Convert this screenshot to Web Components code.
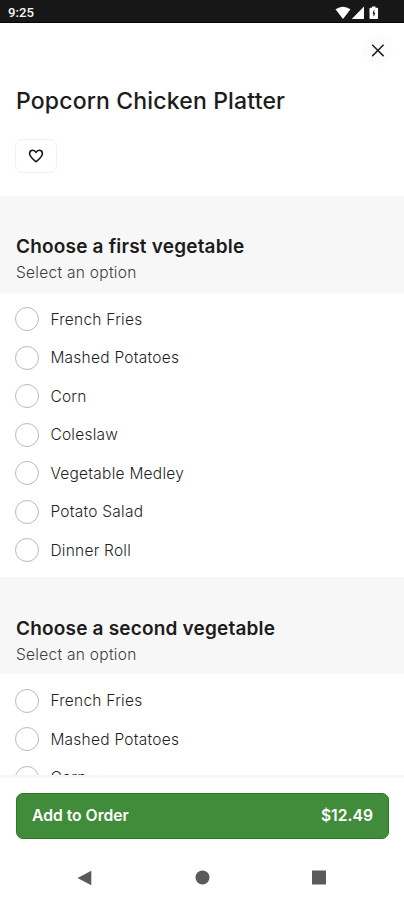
<!DOCTYPE html>
<html lang="en">
<head>
<meta charset="utf-8">
<title>Popcorn Chicken Platter</title>
<style>
html,body{margin:0;height:100%;overflow:hidden;background:#fff}
body{font-family:Inter,"Liberation Sans",sans-serif;color:#1c1c1c}
</style>
</head>
<body>
<order-screen></order-screen>
<script>
const define = (name, html, setup) => {
  const template = document.createElement('template');
  template.innerHTML = html;
  customElements.define(name, class extends HTMLElement {
    constructor() {
      super();
      this.attachShadow({ mode: 'open' }).append(template.content.cloneNode(true));
    }
    connectedCallback() { if (setup) setup(this, this.shadowRoot); }
  });
};

define('status-bar', `
<style>
:host{display:flex;box-sizing:border-box;height:23px;background:#171717;color:#f6f6f6;align-items:center;justify-content:space-between;padding:3px 23px 0 8px;border-bottom:1px solid #050505;font:500 13.200px/20px Roboto,sans-serif}
svg{display:block}
</style>
<span>9:25</span>
<svg width="46" height="14" viewBox="0 0 46 14" fill="#fff">
<path d="M.500 3.200Q8-1.800 15.500 3.200L8 13Z"/>
<path d="M29 .600V13H16.800Z"/>
<path fill-rule="evenodd" d="M37 .500h3.500v1.200h1.700q.8 0 .8.800v9.700q0 .8-.8.800h-6.900q-.8 0-.8-.8V2.500q0-.8.8-.8h1.700ZM38.800 4.200l-1.300 3.200h.9V10.300h.6L40.200 7h-.8V4.200Z"/>
</svg>`);

define('close-button', `
<style>
:host{display:flex;width:30px;height:30px;border-radius:50%;background:#fcfcfc;align-items:center;justify-content:center}
</style>
<svg width="14" height="14" viewBox="0 0 14 14" fill="none" stroke="#222" stroke-width="1.500"><path d="M1.200 1.700 12.600 13.100M12.600 1.700 1.200 13.100"/></svg>`);

define('favorite-button', `
<style>
:host{display:flex;box-sizing:border-box;width:42px;height:34px;border:1px solid #f0f0f0;border-radius:7px;align-items:center;justify-content:center}
</style>
<svg width="16" height="14" viewBox="0 0 16 14" fill="none" stroke="#1b1b1b" stroke-width="1.600" stroke-linejoin="round"><path d="M8 12.700C5 10.200 1.600 7.900 1.600 4.600C1.600 2.600 3 1.300 4.700 1.300C6.200 1.300 7.400 2.200 8 3.500C8.600 2.200 9.800 1.300 11.300 1.300C13 1.300 14.400 2.600 14.400 4.600C14.400 7.900 11 10.200 8 12.700Z"/></svg>`);

define('item-header', `
<style>
:host{display:block;box-sizing:border-box;height:173px;padding:12px 11px 0 15px}
.top{display:flex;justify-content:flex-end}
h1{margin:21px 0 23px 1px;font-size:23px;line-height:30px;font-weight:500;letter-spacing:.160px;white-space:nowrap}
</style>
<div class="top"><close-button></close-button></div>
<h1><slot></slot></h1>
<favorite-button></favorite-button>`);

define('option-row', `
<style>
:host{display:flex;height:38.500px;align-items:center;gap:11px;padding-left:15.400px;font-size:15.500px;font-weight:300;letter-spacing:.250px;color:#1f1f1f}
i{box-sizing:border-box;width:24px;height:24px;border:1px solid #bababa;border-radius:50%}
</style>
<i></i><span><slot></slot></span>`);

define('option-group', `
<style>
:host{display:block}
header{box-sizing:border-box;height:97px;padding:37.400px 16px 0;background:#f7f7f7}
h2{margin:0;font-size:19px;line-height:27px;font-weight:600;letter-spacing:.190px;white-space:nowrap}
p{margin:0;font-size:15.500px;line-height:25px;font-weight:300;letter-spacing:.280px;color:#3c3c3c}
.rows{padding:7.200px 0 7.700px}
</style>
<header><h2></h2><p>Select an option</p></header>
<div class="rows"><slot></slot></div>`,
(host, root) => { root.querySelector('h2').textContent = host.getAttribute('heading'); });

define('order-bar', `
<style>
:host{display:block;border-top:3px solid #f6f6f6;padding:15px 15px 0 16px;background:#fff}
button{display:flex;box-sizing:border-box;width:100%;height:46px;padding:0 15px;border:1px solid #2a7a25;border-radius:7px;background:#408c3b;align-items:center;justify-content:space-between;color:#fff;font:600 15.700px/20px Inter,sans-serif}
</style>
<button><span><slot></slot></span><slot name="price"></slot></button>`);

define('system-nav', `
<style>
:host{display:flex;height:61px;align-items:center;justify-content:space-between;padding:16px 77px 0 77px;box-sizing:border-box;background:#fff}
svg{display:block}
</style>
<svg width="15" height="16" viewBox="0 0 15 16"><path d="M14.300 .700V15.300L.500 8Z" fill="#5a5a5a"/></svg>
<svg width="15" height="15"><circle cx="7.500" cy="7.500" r="7" fill="#5a5a5a"/></svg>
<svg width="15" height="15"><rect x="0" y=".5" width="14" height="14" fill="#5a5a5a"/></svg>`);

define('order-screen', `
<style>
:host{display:flex;flex-direction:column;height:100vh}
main{flex:1;min-height:0;overflow:hidden}
</style>
<status-bar></status-bar>
<main>
<item-header>Popcorn Chicken Platter</item-header>
<option-group heading="Choose a first vegetable">
<option-row>French Fries</option-row><option-row>Mashed Potatoes</option-row><option-row>Corn</option-row><option-row>Coleslaw</option-row><option-row>Vegetable Medley</option-row><option-row>Potato Salad</option-row><option-row>Dinner Roll</option-row>
</option-group>
<option-group heading="Choose a second vegetable">
<option-row>French Fries</option-row><option-row>Mashed Potatoes</option-row><option-row>Corn</option-row>
</option-group>
</main>
<order-bar>Add to Order<span slot="price">$12.49</span></order-bar>
<system-nav></system-nav>`);
</script>
</body>
</html>
